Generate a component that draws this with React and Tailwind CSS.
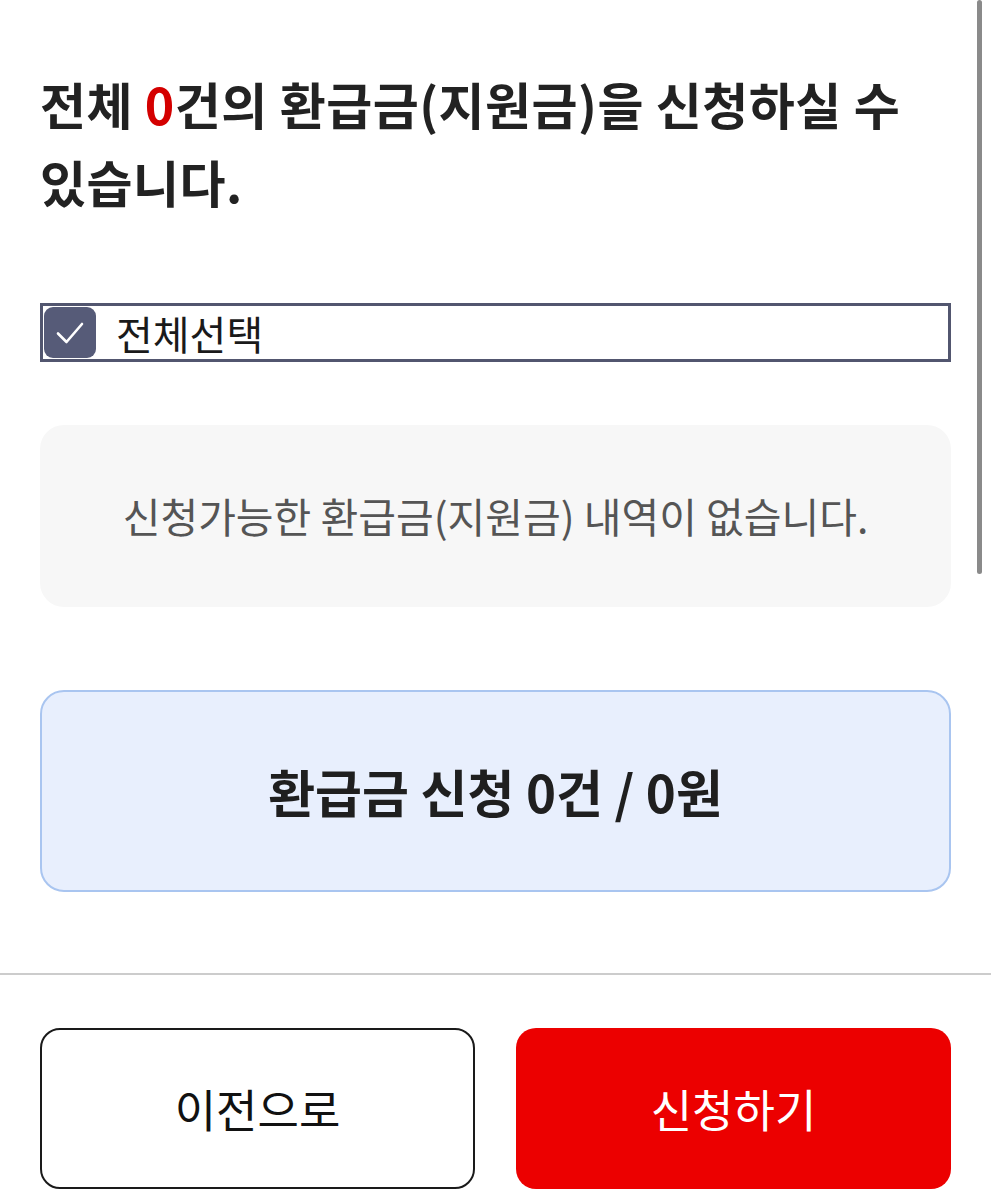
export default function App() {
  const font = { fontFamily: '"Noto Sans CJK KR", "Noto Sans", sans-serif' };
  return (
    <div className="relative min-h-[1200px] bg-white text-[#1f1f1f]" style={font}>
      {/* scroll indicator */}
      <div className="absolute right-[9px] top-0 h-[574px] w-[5px] rounded-full bg-[#8a8a8a]" />

      <div className="px-10 pt-[64px]">
        <h1 className="pr-10 text-[50px] font-bold leading-[78px] tracking-[0.5px] text-[#222]">
          전체 <span className="text-[#d40000]">0</span>건의 환급금(지원금)을 신청하실 수 있습니다.
        </h1>

        {/* select all */}
        <label className="mt-[83px] flex h-[59px] items-center gap-5 border-[3px] border-[#52566f] pl-[1px]">
          <span className="flex h-[51px] w-[52px] items-center justify-center rounded-[9px] bg-[#565b78]">
            <svg width="30" height="24" viewBox="0 0 30 24" fill="none">
              <path d="M3 12.5 L11.5 21 L27 3" stroke="white" strokeWidth="2.6" strokeLinecap="round" strokeLinejoin="round" />
            </svg>
          </span>
          <span className="text-[40px] leading-none text-[#1a1a1a]">전체선택</span>
        </label>

        {/* empty list */}
        <div className="mt-[63px] flex h-[182px] items-center justify-center rounded-[24px] bg-[#f7f7f7]">
          <p className="text-[41px] font-normal text-[#555]">신청가능한 환급금(지원금) 내역이 없습니다.</p>
        </div>

        {/* summary */}
        <div className="mt-[83px] flex h-[202px] items-center justify-center rounded-[24px] border-2 border-[#a9c5f0] bg-[#e8effd]">
          <p className="text-[51px] font-bold text-[#1f1f1f]">환급금 신청 0건 / 0원</p>
        </div>
      </div>

      <div className="mt-[81px] h-[2px] bg-[#cccccc]" />

      <div className="grid grid-cols-2 gap-[41px] px-10 pt-[53px]">
        <button className="flex h-[161px] items-center justify-center rounded-[20px] border-2 border-[#1a1a1a] bg-white text-[45px] text-[#111]">
          이전으로
        </button>
        <button className="flex h-[161px] items-center justify-center rounded-[20px] bg-[#ec0000] text-[45px] text-white">
          신청하기
        </button>
      </div>
    </div>
  );
}
